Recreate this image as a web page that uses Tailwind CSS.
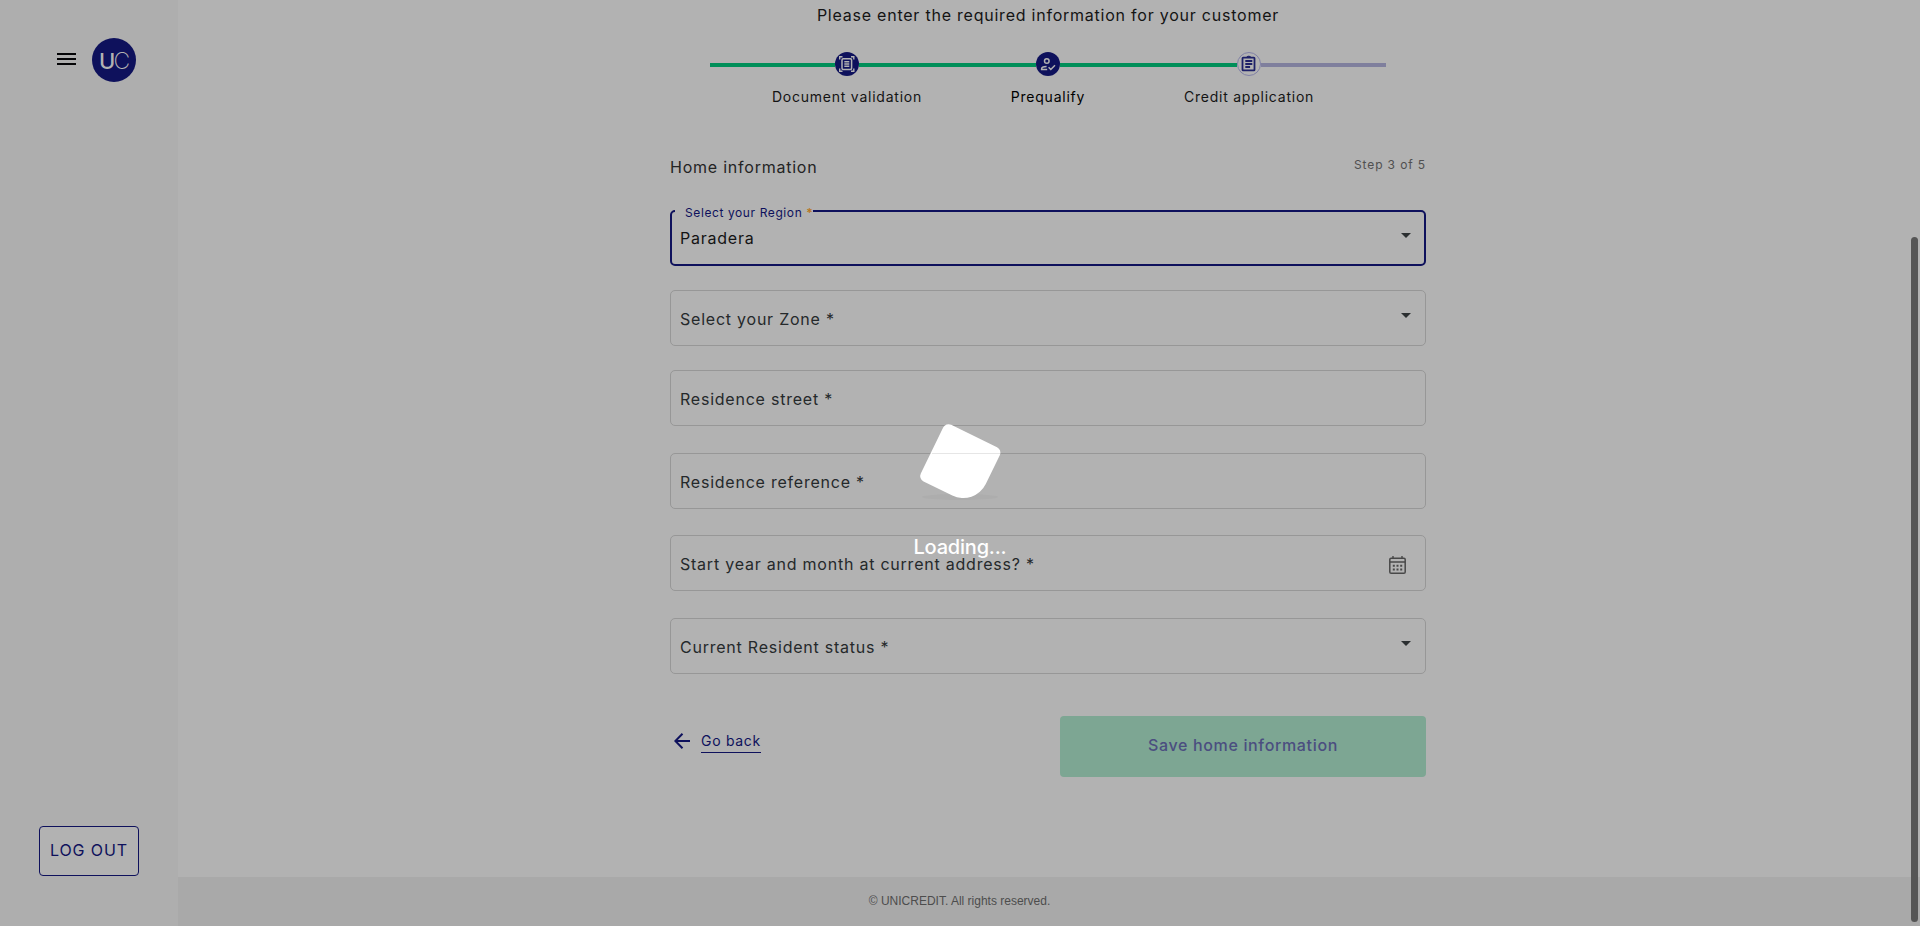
<!DOCTYPE html>
<html lang="en">
<head>
<meta charset="utf-8">
<title>Home information</title>
<script src="https://cdn.jsdelivr.net/npm/@tailwindcss/browser@4"></script>
</head>
<body class="relative flex h-[926px] w-[1920px] overflow-hidden bg-[#b2b2b2] font-['Inter',sans-serif] text-base leading-6 font-normal tracking-[0.77px] text-[#141414]">
  <aside class="flex w-[178px] shrink-0 flex-col justify-between bg-[#aeaeae] pt-[38px] pb-[50px]">
    <div class="flex items-center pl-[57px]">
      <svg class="h-3 w-[19px] -translate-y-px" viewBox="0 0 19 12" fill="#050507"><path d="M0 0h19v2H0zM0 5h19v2H0zM0 10h19v2H0z"/></svg>
      <div class="relative ml-[15.500px] size-11 rounded-full bg-[#0e115c] text-[#b2b2b2]">
        <span class="absolute top-[11px] left-[7.500px] text-[22px] leading-6 font-medium tracking-normal">U</span>
        <span class="absolute top-[11px] left-[22px] text-[23px] leading-6 font-extralight tracking-normal">C</span>
      </div>
    </div>
    <button class="ml-[39px] h-[50px] w-[100px] rounded border border-[#0e115c] bg-[#b2b2b2] pb-0.5 tracking-[0.9px] text-[#0e115c]">LOG OUT</button>
  </aside>

  <div class="flex grow flex-col">
    <main class="h-[877px] pl-[492px]">
      <div class="w-[756px]">
        <p class="pt-[3px] text-center">Please enter the required information for your customer</p>

        <div class="mx-10 mt-[25px] flex h-6 items-center">
          <div class="mt-0.5 h-1 w-[125px] bg-[#008f59]"></div>
          <svg class="size-6" viewBox="0 0 24 24" fill="none" stroke="#b2b2b2"><circle cx="12" cy="12" r="12" fill="#0e115c" stroke="none"/><path stroke-width="1.4" d="M4.700 7.500V4.700h2.800M16 4.700h2.800v2.800M18.800 16.500v2.800H16M7.500 19.300H4.700v-2.800"/><rect x="7" y="6.700" width="9.600" height="10.800" rx="1.200" stroke-width="1.500"/><path stroke-width="1.500" d="M9.300 9.700h5M9.300 12h5M9.300 14.300h5"/></svg>
          <div class="mt-0.5 h-1 w-[177px] bg-[#008f59]"></div>
          <svg class="size-6" viewBox="0 0 24 24" fill="none" stroke="#b2b2b2" stroke-width="1.500"><circle cx="12" cy="12" r="12" fill="#0e115c" stroke="none"/><circle cx="10.800" cy="9" r="2.300"/><path d="M11.200 17.400H5.600v-.5c0-1.300 2.300-2.200 5-2.300M12.600 15.300l2.200 2.200 4.200-4.200"/></svg>
          <div class="mt-0.5 h-1 w-[177px] bg-[#008f59]"></div>
          <svg class="size-6" viewBox="0 0 24 24" fill="none" stroke="#1e2168"><circle cx="12" cy="12" r="11.500" stroke="#8080a6"/><rect x="5.500" y="5.700" width="12" height="12.600" rx=".6" stroke-width="1.800"/><path stroke-width="1.800" d="M8.300 9h7M8.300 12h7M8.300 15h4.800"/><path d="M9.300 5.500a2.500 1.800 0 0 1 4.800 0z" fill="#1e2168"/></svg>
          <div class="mt-0.5 h-1 grow bg-[#7f7f9d]"></div>
        </div>
        <div class="mt-[11px] flex justify-center text-sm leading-5">
          <span class="w-[201px] text-center">Document validation</span>
          <span class="w-[201px] text-center text-black">Prequalify</span>
          <span class="w-[201px] text-center">Credit application</span>
        </div>

        <div class="mt-[48px] flex h-[55px] justify-between text-[#242424]">
          <h2>Home information</h2>
          <span class="text-xs leading-5 tracking-[0.88px] text-[#505050]">Step 3 of 5</span>
        </div>

        <div class="flex flex-col text-[#25292b]">
          <div class="relative flex h-14 items-center justify-between rounded-[5px] border-2 border-[#0e115c] pr-[13px] pl-2 text-[#141414]">
            <span class="absolute -top-2 left-[3px] bg-[#b2b2b2] pl-2.5 text-xs leading-[18px] tracking-[0.6px] text-[#0e115c]">Select your Region <b class="font-semibold text-[#b8771e]">*</b></span>
            <span>Paradera</span>
            <svg class="-mt-[5px] h-[5px] w-2.5" viewBox="0 0 10 5" fill="#2b2f31"><path d="M0 0h10L5 5z"/></svg>
          </div>
          <div class="mt-6 flex h-14 items-center justify-between rounded-[5px] border border-[#979797] pt-0.5 pr-3.5 pl-[9px]">
            <span>Select your Zone *</span>
            <svg class="-mt-[7px] h-[5px] w-2.5" viewBox="0 0 10 5" fill="#2b2f31"><path d="M0 0h10L5 5z"/></svg>
          </div>
          <div class="mt-6 flex h-14 items-center rounded-[5px] border border-[#979797] pt-0.5 pl-[9px]">Residence street *</div>
          <div class="mt-[27px] flex h-14 items-center rounded-[5px] border border-[#979797] pt-0.5 pl-[9px]">Residence reference *</div>
          <div class="mt-[26px] flex h-14 items-center justify-between rounded-[5px] border border-[#979797] pt-0.5 pr-[19px] pl-[9px]">
            <span>Start year and month at current address? *</span>
            <svg class="mt-0.5 h-[18px] w-[17px]" viewBox="0 0 17 18" fill="none" stroke="#484848"><rect x=".8" y="2.200" width="15.400" height="15" rx="1.300" stroke-width="1.500"/><path stroke-width="1.400" d="M1 6h15M4 0v3M13 0v3"/><path stroke-width="1.900" stroke-dasharray="2 1.700" d="M3.800 9.800h9.800M3.800 13.500h9.800"/></svg>
          </div>
          <div class="mt-[27px] flex h-14 items-center justify-between rounded-[5px] border border-[#979797] pt-0.5 pr-3.5 pl-[9px]">
            <span>Current Resident status *</span>
            <svg class="-mt-[7px] h-[5px] w-2.5" viewBox="0 0 10 5" fill="#2b2f31"><path d="M0 0h10L5 5z"/></svg>
          </div>
        </div>

        <div class="mt-[42px] flex items-start justify-between">
          <a class="flex items-center pt-[13px] pl-1 text-sm leading-[23px] tracking-[0.7px] text-[#0e115c]">
            <svg class="mr-[11px] size-4" viewBox="0 0 16 16" fill="none" stroke="#0e115c" stroke-width="2"><path d="M16 8H1.500M8.500.7L1.300 8l7.200 7.300"/></svg>
            <span class="border-b border-[#0e115c]">Go back</span>
          </a>
          <button class="h-[61px] w-[366px] rounded bg-[#7da693] pb-[3px] font-medium tracking-[0.65px] text-[#4b4e80]">Save home information</button>
        </div>
      </div>
    </main>
    <footer class="flex h-[49px] items-center justify-center bg-[#a9a9a9] pr-[179px] pb-px font-['Liberation_Sans',sans-serif] text-xs font-normal tracking-normal text-[#4d4d4d]">© UNICREDIT. All rights reserved.</footer>
  </div>

  <div class="absolute top-[237px] left-[1911px] h-[685px] w-[7px] rounded-full bg-[#555]"></div>
  <svg class="absolute top-[414px] left-[910px]" width="100" height="100" viewBox="910 414 100 100">
    <ellipse cx="960" cy="497" rx="38" ry="3" fill="#adadad"/>
    <path transform="translate(960.300 464.300) rotate(26)" d="M-25.500-31.500h51a6 6 0 0 1 6 6v32a25 25 0 0 1-25 25h-32a6 6 0 0 1-6-6v-51a6 6 0 0 1 6-6z" fill="#fff"/>
    <path d="M932 453.500h68" stroke="#e6e6e6"/>
  </svg>
  <div class="absolute top-[535px] left-[913.500px] text-xl leading-6 font-medium tracking-[-0.2px] text-white">Loading...</div>
</body>
</html>
